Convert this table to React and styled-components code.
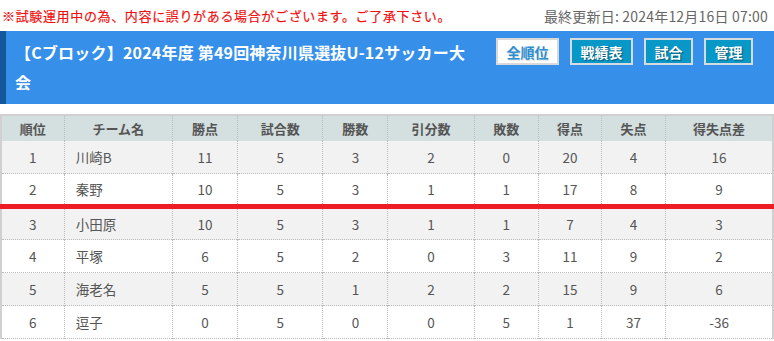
import React from 'react';
import styled, { createGlobalStyle } from 'styled-components';

const GlobalStyle = createGlobalStyle`
  html, body {
    margin: 0;
    padding: 0;
    background: #fff;
  }
  body {
    font-family: 'Noto Sans CJK JP', 'Noto Sans', sans-serif;
  }
`;

const Page = styled.div`
  width: 774px;
`;

const NoticeBar = styled.div`
  display: flex;
  justify-content: space-between;
  align-items: center;
  height: 31px;
  padding: 0 6px 0 2px;
  box-sizing: border-box;
`;

const Notice = styled.span`
  color: #f01010;
  font-size: 13px;
  letter-spacing: 0.65px;
  -webkit-text-stroke: 0.2px #f01010;
`;

const Updated = styled.span`
  color: #666;
  font-size: 14px;
  letter-spacing: 0.2px;
`;

const Header = styled.div`
  display: flex;
  align-items: flex-start;
  background: #3690ea;
  border-left: 6px solid #14579b;
  padding: 6px 21px 7px 9px;
  height: 73px;
  box-sizing: border-box;
`;

const Title = styled.h1`
  flex: 1;
  margin: 0;
  font-size: 16px;
  font-weight: bold;
  line-height: 30px;
  letter-spacing: 0.2px;
  color: #fff;
`;

const Nav = styled.div`
  display: flex;
  gap: 11px;
  margin: 1px 0 0 20px;
`;

const NavButton = styled.a`
  display: flex;
  align-items: center;
  justify-content: center;
  height: 27px;
  padding: 0 8.5px;
  box-sizing: border-box;
  border: 2px solid ${props => (props.active ? '#d9d9d9' : '#d6dbe0')};
  background: ${props => (props.active ? '#fff' : '#0898c8')};
  color: ${props => (props.active ? '#2b8fd2' : '#fff')};
  font-size: 14px;
  font-weight: bold;
  text-shadow: ${props =>
    props.active ? '1px 1px 1px rgba(0,0,0,0.15)' : '1px 1px 1px rgba(0,0,0,0.45)'};
  white-space: nowrap;
`;

const Table = styled.table`
  margin-top: 10px;
  width: 774px;
  border-collapse: collapse;
  table-layout: fixed;
  border: 2px solid #d0d0d0;
  border-bottom: none;
  font-size: 13.5px;
  color: #555;
`;

const Th = styled.th`
  height: 25px;
  padding: 0;
  background: #d4dfdf;
  font-size: 13px;
  font-weight: bold;
  color: #555;
  border-left: 1px dotted #bbb;
  &:first-child {
    border-left: none;
  }
`;

const Row = styled.tr`
  background: ${props => (props.striped ? '#f2f2f2' : '#fff')};
  border-bottom: ${props => (props.cutoff ? '5px solid #ee1c25' : '1px dotted #bbb')};
`;

const Td = styled.td`
  height: ${props => (props.short ? '30px' : '32px')};
  padding: 0 ${props => (props.left ? '11px' : '0')};
  text-align: ${props => (props.left ? 'left' : 'center')};
  border-left: 1px dotted #bbb;
  &:first-child {
    border-left: none;
  }
`;

const columns = [
  { label: '順位', width: 63 },
  { label: 'チーム名', width: 108 },
  { label: '勝点', width: 65 },
  { label: '試合数', width: 85 },
  { label: '勝数', width: 65 },
  { label: '引分数', width: 86 },
  { label: '敗数', width: 64 },
  { label: '得点', width: 63 },
  { label: '失点', width: 64 },
  { label: '得失点差', width: 107 },
];

const standings = [
  [1, '川崎B', 11, 5, 3, 2, 0, 20, 4, 16],
  [2, '秦野', 10, 5, 3, 1, 1, 17, 8, 9],
  [3, '小田原', 10, 5, 3, 1, 1, 7, 4, 3],
  [4, '平塚', 6, 5, 2, 0, 3, 11, 9, 2],
  [5, '海老名', 5, 5, 1, 2, 2, 15, 9, 6],
  [6, '逗子', 0, 5, 0, 0, 5, 1, 37, -36],
];

// promotion line sits under the 2nd place
const CUTOFF = 1;

const App = () => (
  <Page>
    <GlobalStyle />
    <NoticeBar>
      <Notice>※試験運用中の為、内容に誤りがある場合がございます。ご了承下さい。</Notice>
      <Updated>最終更新日: 2024年12月16日 07:00</Updated>
    </NoticeBar>
    <Header>
      <Title>【Cブロック】2024年度 第49回神奈川県選抜U-12サッカー大会</Title>
      <Nav>
        <NavButton active>全順位</NavButton>
        <NavButton>戦績表</NavButton>
        <NavButton>試合</NavButton>
        <NavButton>管理</NavButton>
      </Nav>
    </Header>
    <Table>
      <colgroup>
        {columns.map(col => (
          <col key={col.label} style={{ width: col.width }} />
        ))}
      </colgroup>
      <thead>
        <tr>
          {columns.map(col => (
            <Th key={col.label}>{col.label}</Th>
          ))}
        </tr>
      </thead>
      <tbody>
        {standings.map((row, i) => (
          <Row key={row[0]} striped={i % 2 === 0} cutoff={i === CUTOFF}>
            {row.map((value, j) => (
              <Td
                key={j}
                left={j === 1}
                short={i === CUTOFF || i === CUTOFF + 1}
              >
                {value}
              </Td>
            ))}
          </Row>
        ))}
      </tbody>
    </Table>
  </Page>
);

export default App;
